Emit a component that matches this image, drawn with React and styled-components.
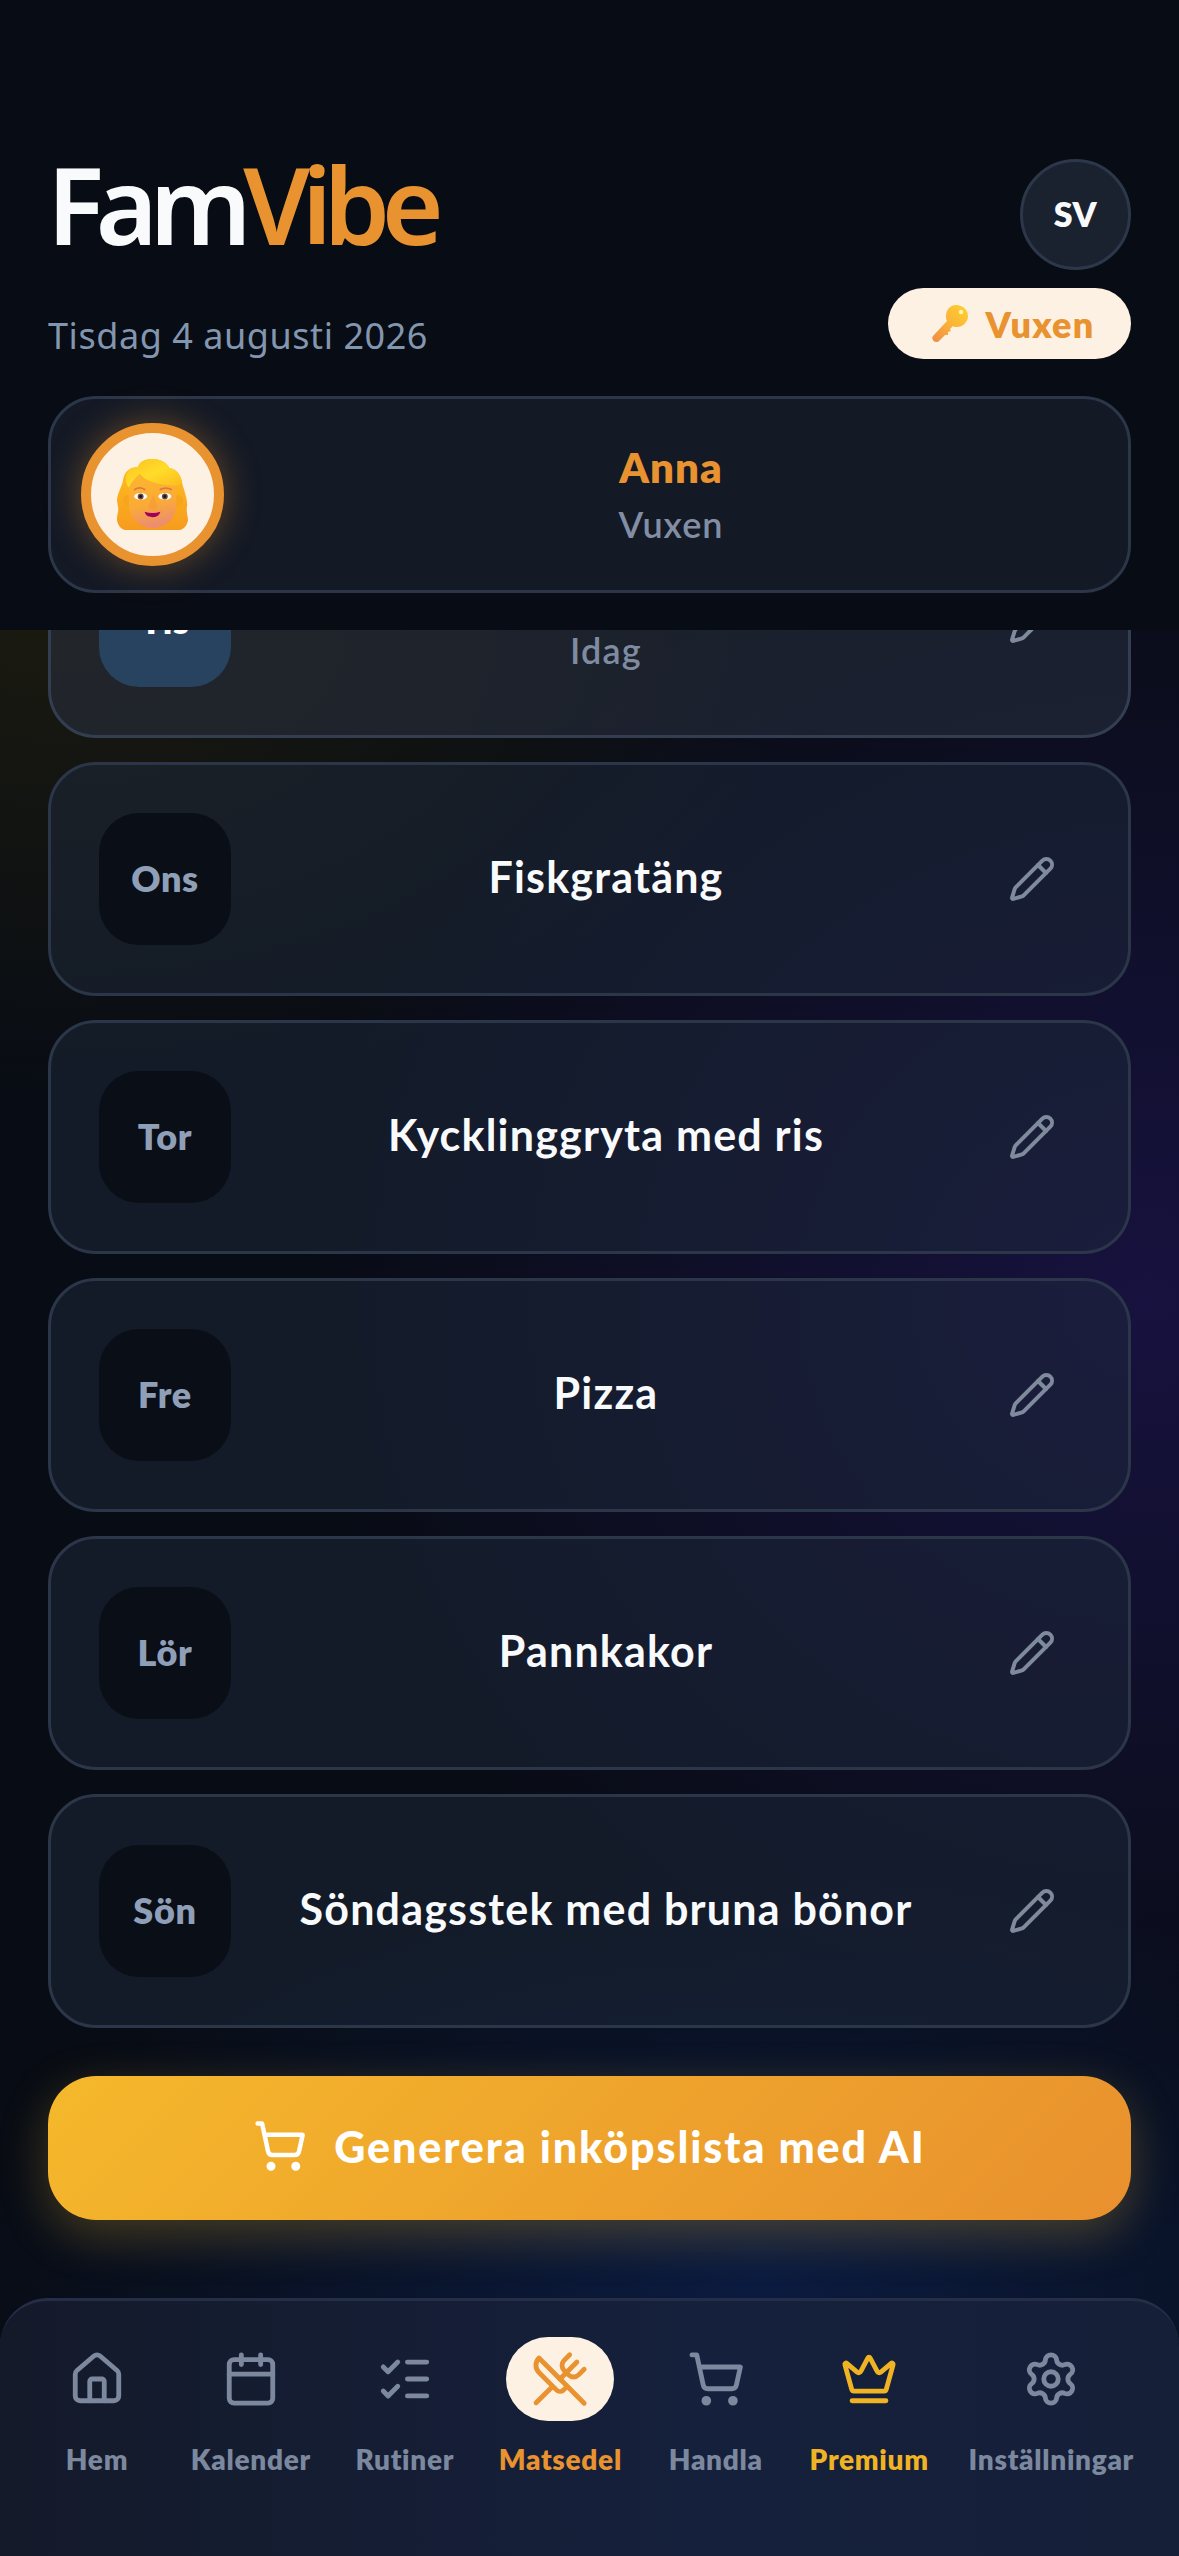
import React from 'react';
import styled, { createGlobalStyle } from 'styled-components';
import { House, Calendar, ListChecks, UtensilsCrossed, ShoppingCart, Crown, Settings, Pencil } from 'lucide-react';

const ORANGE = '#e89230';
const CREAM = '#fdf1e3';
const YELLOW = '#f0b323';
const FONT = '"Lato", "Noto Sans", sans-serif';

const GlobalStyle = createGlobalStyle`
    html, body {
        margin: 0;
        padding: 0;
        background: #080c14;
    }
`;

const Page = styled.div`
    width: 1179px;
    height: 2556px;
    display: flex;
    flex-direction: column;
    overflow: hidden;
    font-family: ${FONT};
    color: #f8fafc;
    background:
        radial-gradient(ellipse 860px 800px at 1150px 1300px, #17123f 0%, rgba(23, 18, 63, 0) 100%),
        radial-gradient(ellipse 800px 420px at 760px 2280px, #0b1b40 0%, rgba(11, 27, 64, 0) 100%),
        radial-gradient(ellipse 760px 480px at 60px 620px, #1a1a10 0%, rgba(26, 26, 16, 0) 100%),
        #080c14;
`;

const Header = styled.header`
    flex: none;
    height: 630px;
    box-sizing: border-box;
    padding: 159px 48px 0;
    background: #080c14;
    position: relative;
    z-index: 1;
`;

const TopRow = styled.div`
    display: flex;
    justify-content: space-between;
    align-items: flex-start;
    height: 110px;
`;

const Logo = styled.h1`
    margin: -20px 0 0 -1px;
    font-family: "Noto Sans", sans-serif;
    font-size: 106px;
    line-height: 130px;
    font-weight: 600;
    letter-spacing: -8.2px;
    color: #f8fafc;
    span {
        color: ${ORANGE};
    }
`;

const LangButton = styled.div`
    width: 111px;
    height: 111px;
    box-sizing: border-box;
    display: flex;
    align-items: center;
    justify-content: center;
    padding-bottom: 2px;
    border-radius: 50%;
    border: 3px solid #2c384a;
    background: #1a2230;
    font-size: 34px;
    font-weight: 800;
    letter-spacing: 0.6px;
`;

const DateRow = styled.div`
    display: flex;
    justify-content: space-between;
    align-items: center;
    margin-top: 19px;
    height: 71px;
`;

const DateText = styled.div`
    font-family: "Noto Sans", sans-serif;
    font-size: 36px;
    color: #8396b0;
    letter-spacing: 0.55px;
    margin-top: 24px;
`;

const RolePill = styled.div`
    width: 243px;
    height: 71px;
    box-sizing: border-box;
    display: flex;
    align-items: center;
    justify-content: center;
    gap: 18px;
    padding-left: 6px;
    border-radius: 36px;
    background: ${CREAM};
    color: ${ORANGE};
    font-size: 36px;
    font-weight: 800;
    letter-spacing: 1.2px;
`;

const ProfileCard = styled.section`
    margin-top: 37px;
    height: 197px;
    box-sizing: border-box;
    display: flex;
    align-items: center;
    gap: 18px;
    padding: 0 30px;
    border: 3px solid #2c3649;
    border-radius: 48px;
    background: #131925;
`;

const Avatar = styled.div`
    flex: none;
    width: 143px;
    height: 143px;
    box-sizing: border-box;
    display: flex;
    align-items: center;
    justify-content: center;
    border-radius: 50%;
    border: 10px solid ${ORANGE};
    background: ${CREAM};
    box-shadow: 0 0 36px rgba(232, 146, 48, 0.4);
`;

const ProfileText = styled.div`
    flex: 1;
    padding: 2px 0 0 2px;
    text-align: center;
`;

const ProfileName = styled.div`
    font-size: 42px;
    line-height: 54px;
    font-weight: 800;
    letter-spacing: 1px;
    color: ${ORANGE};
`;

const ProfileRole = styled.div`
    margin-top: 3px;
    font-size: 36px;
    line-height: 54px;
    font-weight: 600;
    letter-spacing: 1px;
    color: #828ea4;
`;

const Main = styled.main`
    flex: 1;
    min-height: 0;
    display: flex;
    flex-direction: column;
    justify-content: flex-end;
    overflow: hidden;
    padding: 0 48px 78px;
`;

const MealList = styled.div`
    flex: none;
    display: flex;
    flex-direction: column;
    gap: 24px;
`;

const MealCard = styled.article`
    flex: none;
    height: 234px;
    box-sizing: border-box;
    display: flex;
    align-items: center;
    padding: 0 45px 0 48px;
    border: 3px solid ${(p) => (p.$today ? '#333e50' : '#2c3649')};
    border-radius: 48px;
    background: ${(p) => (p.$today ? 'rgba(42, 50, 66, 0.55)' : 'rgba(30, 41, 59, 0.5)')};
`;

const DayBox = styled.div`
    flex: none;
    width: 132px;
    height: 132px;
    box-sizing: border-box;
    display: flex;
    align-items: center;
    justify-content: center;
    padding-bottom: 3px;
    border-radius: 40px;
    font-size: 36px;
    font-weight: 800;
    letter-spacing: 0.7px;
    color: ${(p) => (p.$today ? '#ffffff' : '#8f9fb8')};
    background: ${(p) => (p.$today ? '#27435f' : '#0a0e16')};
`;

const MealBody = styled.div`
    flex: 1;
    text-align: center;
`;

const MealName = styled.div`
    margin-bottom: 6px;
    font-size: 43px;
    line-height: 57px;
    min-height: 57px;
    font-weight: 700;
    letter-spacing: 1.2px;
    color: #f8fafc;
`;

const MealNote = styled.div`
    margin-top: -5px;
    font-size: 36px;
    line-height: 49px;
    font-weight: 600;
    letter-spacing: 1.2px;
    color: #7f8ba0;
`;

const EditButton = styled.div`
    flex: none;
    display: flex;
    padding: 27px;
    color: #7f8a9d;
`;

const GenerateButton = styled.button`
    flex: none;
    margin-top: 48px;
    height: 144px;
    box-sizing: border-box;
    display: flex;
    align-items: center;
    justify-content: center;
    gap: 27px;
    padding: 0 0 4px;
    border: 0;
    border-radius: 48px;
    font-family: ${FONT};
    font-size: 43px;
    font-weight: 900;
    letter-spacing: 1.9px;
    color: #ffffff;
    background: linear-gradient(135deg, #f5b82b 0%, #e8902e 100%);
    box-shadow: 0 15px 48px rgba(245, 184, 43, 0.26);
`;

const Nav = styled.nav`
    flex: none;
    height: 258px;
    box-sizing: border-box;
    display: flex;
    justify-content: space-between;
    align-items: flex-start;
    padding: 36px 45px 0 43px;
    border-top: 3px solid #242f47;
    border-radius: 48px 48px 0 0;
    background: linear-gradient(90deg, #141a2a 0%, #15203c 60%, #151f38 100%);
`;

const NavItem = styled.div`
    min-width: 108px;
    display: flex;
    flex-direction: column;
    align-items: center;
    gap: 21px;
    font-size: 28px;
    font-weight: 800;
    letter-spacing: 0.7px;
    color: ${(p) => p.$color || '#7c889e'};
`;

const NavIcon = styled.div`
    width: 108px;
    height: 84px;
    display: flex;
    align-items: center;
    justify-content: center;
    border-radius: 42px;
    background: ${(p) => (p.$active ? CREAM : 'transparent')};
`;

const WomanEmoji = () => (
    <svg width="71" height="71" viewBox="0 0 72 72">
        <defs>
            <linearGradient id="hairBack" x1="0" y1="0" x2="0" y2="1">
                <stop offset="0" stopColor="#ffc21f" />
                <stop offset="1" stopColor="#f79b1e" />
            </linearGradient>
            <linearGradient id="hairTop" x1="0" y1="0" x2="1" y2="1">
                <stop offset="0" stopColor="#fcc01f" />
                <stop offset="0.5" stopColor="#ffdc2a" />
                <stop offset="1" stopColor="#fcb81c" />
            </linearGradient>
            <linearGradient id="skin" x1="0.1" y1="0" x2="0.3" y2="1">
                <stop offset="0" stopColor="#fdb52c" />
                <stop offset="0.6" stopColor="#fbab36" />
                <stop offset="1" stopColor="#ec8d70" />
            </linearGradient>
        </defs>
        <path d="M36 0C28 0 23 3 21 8C14 8 7 12 6 22C5 28 1 33 0 41C0 46 2 49 1 54C0 58 0 60 0 62C1 68 5 72 10 72H62C67 72 71 68 72 62C72 58 70 54 71 48C72 42 68 32 66 24C65 16 60 10 53 9C50 3 43 0 36 0Z" fill="url(#hairBack)" />
        <path d="M6 42c0-4 3-6 6-5v11c-3 0-6-2-6-6zM67 42c0-4-3-6-7-5v11c4 0 7-2 7-6z" fill="#f7a51f" />
        <path d="M12 26c0-6 8-11 24-11s24 5 24 11v20c0 14-11 24-24 24S12 60 12 46z" fill="url(#skin)" />
        <path d="M36 0C28 0 23 3 21 8C14 8 9 13 9 20C9 24 10 27 12 29C14 24 18 20 23 15C28 22 42 27 60 27C62 27 64 26 66 24C65 16 60 10 53 9C50 3 43 0 36 0Z" fill="url(#hairTop)" />
        <path d="M18 31c3-2 7-2 10 0M44 31c3-2 8-2 11 0" fill="none" stroke="#d87a45" strokeWidth="1.8" strokeLinecap="round" />
        <ellipse cx="24" cy="38" rx="6.500" ry="3.400" fill="#fff" />
        <ellipse cx="48.500" cy="38" rx="6.500" ry="3.400" fill="#fff" />
        <circle cx="24" cy="38" r="3" fill="#6d4a3f" />
        <circle cx="48.500" cy="38" r="3" fill="#6d4a3f" />
        <circle cx="24" cy="38" r="1.500" fill="#1d1220" />
        <circle cx="48.500" cy="38" r="1.500" fill="#1d1220" />
        <path d="M36 38c-1.500 4-4 8-4 10 0 2 2 3 4.500 3s4.500-1 4.500-3c0-2-2.500-6-3-10z" fill="#f29b34" opacity="0.6" />
        <path d="M28 53.500c5 1.600 11 1.600 16 0-1 4-4.500 5.500-8 5.500s-7-1.500-8-5.500z" fill="#a3005c" />
    </svg>
);

const KeyEmoji = () => (
    <svg width="37" height="37" viewBox="0 0 37 37">
        <defs>
            <linearGradient id="keyFill" x1="1" y1="0" x2="0" y2="1">
                <stop offset="0" stopColor="#ffd22e" />
                <stop offset="0.5" stopColor="#fbb339" />
                <stop offset="1" stopColor="#ee8b45" />
            </linearGradient>
        </defs>
        <path d="M25 0c7 0 12 5 12 11s-5 11-11 11c-2 0-3 0-4-1l-3 3 1 2-3 1 0 3-3 0-6 6c-2 2-5 1-6-1-1-1-1-3 0-4l14-15c-1-2-1-3-1-5C15 5 19 0 25 0z" fill="url(#keyFill)" />
        <circle cx="30" cy="7" r="2.2" fill="#fff3b0" />
    </svg>
);

const MEALS = [
    { day: 'Tis', name: '', note: 'Idag', today: true },
    { day: 'Ons', name: 'Fiskgratäng' },
    { day: 'Tor', name: 'Kycklinggryta med ris' },
    { day: 'Fre', name: 'Pizza' },
    { day: 'Lör', name: 'Pannkakor' },
    { day: 'Sön', name: 'Söndagsstek med bruna bönor' },
];

const NAV_ITEMS = [
    { label: 'Hem', Icon: House },
    { label: 'Kalender', Icon: Calendar },
    { label: 'Rutiner', Icon: ListChecks },
    { label: 'Matsedel', Icon: UtensilsCrossed, color: ORANGE, active: true },
    { label: 'Handla', Icon: ShoppingCart },
    { label: 'Premium', Icon: Crown, color: YELLOW },
    { label: 'Inställningar', Icon: Settings },
];

export default function App() {
    return (
        <Page>
            <GlobalStyle />
            <Header>
                <TopRow>
                    <Logo>Fam<span>Vibe</span></Logo>
                    <LangButton>SV</LangButton>
                </TopRow>
                <DateRow>
                    <DateText>Tisdag 4 augusti 2026</DateText>
                    <RolePill><KeyEmoji />Vuxen</RolePill>
                </DateRow>
                <ProfileCard>
                    <Avatar><WomanEmoji /></Avatar>
                    <ProfileText>
                        <ProfileName>Anna</ProfileName>
                        <ProfileRole>Vuxen</ProfileRole>
                    </ProfileText>
                </ProfileCard>
            </Header>
            <Main>
                <MealList>
                    {MEALS.map((meal) => (
                        <MealCard key={meal.day} $today={meal.today}>
                            <DayBox $today={meal.today}>{meal.day}</DayBox>
                            <MealBody>
                                <MealName>{meal.name}</MealName>
                                {meal.note && <MealNote>{meal.note}</MealNote>}
                            </MealBody>
                            <EditButton><Pencil size={48} strokeWidth={2} /></EditButton>
                        </MealCard>
                    ))}
                </MealList>
                <GenerateButton>
                    <ShoppingCart size={54} strokeWidth={2} />
                    Generera inköpslista med AI
                </GenerateButton>
            </Main>
            <Nav>
                {NAV_ITEMS.map(({ label, Icon, color, active }) => (
                    <NavItem key={label} $color={color}>
                        <NavIcon $active={active}><Icon size={58} strokeWidth={2} /></NavIcon>
                        {label}
                    </NavItem>
                ))}
            </Nav>
        </Page>
    );
}
